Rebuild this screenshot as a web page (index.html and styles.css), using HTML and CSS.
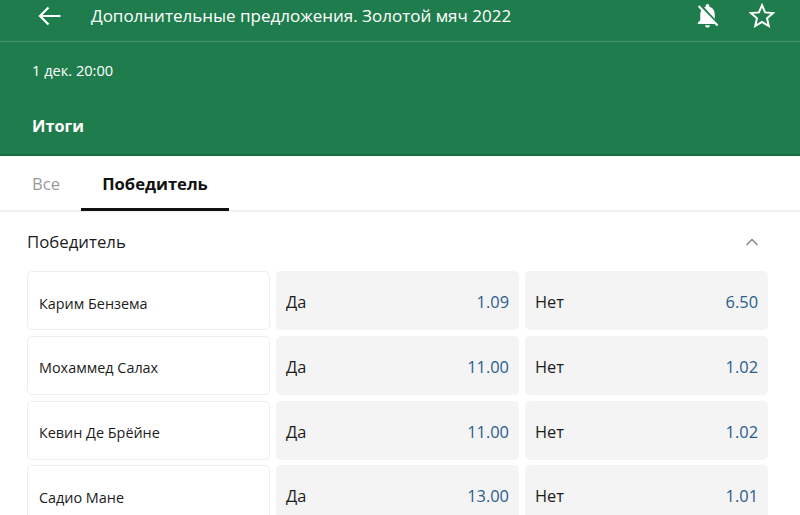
FILE: index.html
```html
<!DOCTYPE html>
<html lang="ru">
<head>
    <meta charset="UTF-8">
    <title>Дополнительные предложения</title>
    <link rel="stylesheet" href="styles.css">
</head>
<body>
    <header class="hero">
        <div class="topbar">
            <svg class="back" width="24" height="20" viewBox="0 0 24 20"><path d="M22.500 10H2M10.500 1.500 2 10l8.500 8.500" fill="none" stroke="#fff" stroke-width="2.200"/></svg>
            <h1 class="title">Дополнительные предложения. Золотой мяч 2022</h1>
            <svg class="bell" width="29" height="29" viewBox="0 0 24 24"><path fill="#fff" d="M20 18.690 7.840 6.140 5.270 3.490 4 4.760l2.800 2.800v.01c-.52.99-.8 2.160-.8 3.420v5l-2 2v1h13.730l2 2L21 19.720l-1-1.030zM12 22c1.110 0 2-.89 2-2h-4c0 1.110.89 2 2 2zm6-7.320V11c0-3.080-1.640-5.640-4.500-6.320V4c0-.83-.67-1.500-1.500-1.500s-1.500.67-1.500 1.500v.68c-.15.03-.29.08-.42.12-.1.03-.2.07-.3.11h-.01c-.2.08-.4.17-.59.27-.01 0-.01 0-.02.01L18 14.680z"/></svg>
            <svg class="star" width="26" height="25" viewBox="0 0 26 25"><path d="M13 2.200 16.100 9.400 24 10.100 18 15.300 19.800 23 13 19 6.200 23 8 15.300 2 10.100 9.900 9.400z" fill="none" stroke="#fff" stroke-width="2"/></svg>
        </div>
        <p class="date">1 дек. 20:00</p>
        <p class="section-name">Итоги</p>
    </header>

    <nav class="tabs">
        <span class="tab">Все</span>
        <span class="tab active">Победитель</span>
    </nav>

    <section class="market">
        <div class="market-head">
            <h2>Победитель</h2>
            <svg width="14" height="8" viewBox="0 0 14 8"><path d="M1.500 7 7 1.500 12.500 7" fill="none" stroke="#8a8a8a" stroke-width="1.500"/></svg>
        </div>
        <div class="rows">
            <div class="row">
                <div class="player">Карим Бензема</div>
                <div class="odd"><span>Да</span><b>1.09</b></div>
                <div class="odd"><span>Нет</span><b>6.50</b></div>
            </div>
            <div class="row">
                <div class="player">Мохаммед Салах</div>
                <div class="odd"><span>Да</span><b>11.00</b></div>
                <div class="odd"><span>Нет</span><b>1.02</b></div>
            </div>
            <div class="row">
                <div class="player">Кевин Де Брёйне</div>
                <div class="odd"><span>Да</span><b>11.00</b></div>
                <div class="odd"><span>Нет</span><b>1.02</b></div>
            </div>
            <div class="row">
                <div class="player">Садио Мане</div>
                <div class="odd"><span>Да</span><b>13.00</b></div>
                <div class="odd"><span>Нет</span><b>1.01</b></div>
            </div>
        </div>
    </section>
</body>
</html>
```

FILE: styles.css
```css
* {
    margin: 0;
    padding: 0;
    box-sizing: border-box;
}
html, body {
    height: 515px;
    overflow: hidden;
}
body {
    background: #fff;
    font-family: "Open Sans", "Noto Sans", sans-serif;
    color: #1c1c1c;
}
.hero {
    height: 156px;
    background: #1f7d4d;
    border-bottom: 2px solid #176b40;
    color: #fff;
}
.topbar {
    height: 42px;
    display: flex;
    align-items: center;
    padding: 0 25px 10px 38px;
    border-bottom: 1px solid #46946c;
}
.title {
    flex: 1;
    margin-left: 29px;
    font-size: 17px;
    font-weight: 400;
}
.bell {
    margin-right: 27px;
}
.date {
    margin: 18px 0 0 32px;
    font-size: 14.600px;
    line-height: 20px;
}
.section-name {
    margin: 35px 0 0 32px;
    font-size: 16.300px;
    font-weight: 700;
    line-height: 22px;
}
.tabs {
    height: 56px;
    display: flex;
    padding-left: 32px;
    border-bottom: 2px solid #f0f0f0;
}
.tab {
    font-size: 16.600px;
    line-height: 55px;
    color: #9a9a9a;
}
.tab.active {
    width: 148px;
    height: 55px;
    margin-left: 21px;
    border-bottom: 3px solid #111;
    text-align: center;
    font-weight: 700;
    color: #111;
}
.market {
    padding: 0 32px 0 27px;
}
.market-head {
    height: 59px;
    display: flex;
    justify-content: space-between;
    align-items: center;
    padding-right: 9px;
}
.market-head h2 {
    font-size: 16.800px;
    font-weight: 400;
}
.rows {
    display: flex;
    flex-direction: column;
    gap: 5.800px;
}
.row {
    display: grid;
    grid-template-columns: repeat(3, 1fr);
    gap: 6px;
    height: 59px;
}
.player {
    display: flex;
    align-items: center;
    padding: 5px 0 0 11px;
    border: 1px solid #eee;
    border-radius: 5px;
    font-size: 14.400px;
}
.odd {
    display: flex;
    justify-content: space-between;
    align-items: center;
    padding: 2px 10px 0;
    background: #f4f4f4;
    border-radius: 5px;
    font-size: 16.400px;
}
.odd b {
    font-weight: 400;
    color: #2a5d8f;
}
```
